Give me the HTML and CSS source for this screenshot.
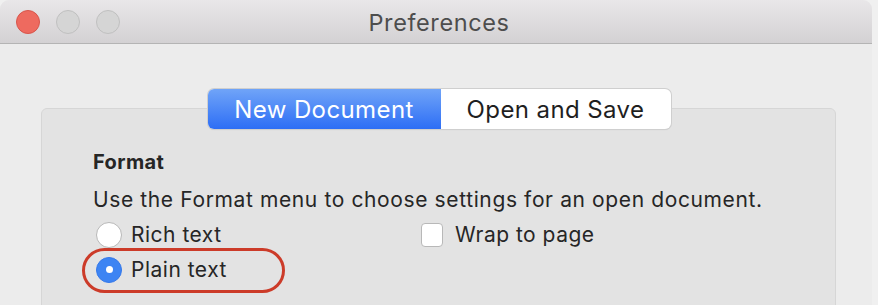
FILE: index.html
```html
<!DOCTYPE html>
<html lang="en">
<head>
  <meta charset="UTF-8">
  <title>Preferences</title>
  <link rel="stylesheet" href="styles.css">
</head>
<body>
  <div class="window">
    <div class="titlebar">
      <div class="lights">
        <span class="light close"></span>
        <span class="light"></span>
        <span class="light"></span>
      </div>
      <div class="title">Preferences</div>
    </div>

    <div class="content">
      <div class="segmented">
        <div class="seg active">New Document</div>
        <div class="seg">Open and Save</div>
      </div>

      <div class="panel">
        <div class="heading">Format</div>
        <div class="desc">Use the Format menu to choose settings for an open document.</div>

        <div class="options">
          <div class="col">
            <label class="option">
              <span class="radio"></span>
              Rich text
            </label>
            <label class="option marked">
              <span class="radio on"></span>
              Plain text
            </label>
          </div>
          <div class="col">
            <label class="option">
              <span class="check"></span>
              Wrap to page
            </label>
          </div>
        </div>
      </div>
    </div>
  </div>
</body>
</html>
```

FILE: styles.css
```css
body {
  margin: 0;
  width: 878px;
  height: 305px;
  overflow: hidden;
  background: #f0f0f0;
  font-family: 'Inter', 'Liberation Sans', sans-serif;
  color: #262626;
}
.window {
  width: 872px;
  height: 305px;
  background: #ececec;
  border-radius: 9px 9px 0 0;
  overflow: hidden;
}
.titlebar {
  height: 43px;
  border-bottom: 1px solid #b4b4b4;
  background: linear-gradient(#e9e7e9, #d3d1d3);
  display: flex;
  align-items: center;
  position: relative;
}
.lights {
  display: flex;
  gap: 16px;
  padding-left: 16px;
  margin-top: 1px;
}
.light {
  width: 22px;
  height: 22px;
  border-radius: 50%;
  background: #d5d5d5;
  border: 1px solid #c0c0c0;
}
.light.close {
  background: #ee6a5f;
  border-color: #d8554b;
}
.title {
  position: absolute;
  left: 0;
  right: -6px;
  top: 9px;
  text-align: center;
  font-size: 23.5px;
  line-height: 28px;
  letter-spacing: 0.6px;
  color: #4d4d4d;
}
.content {
  padding-top: 45px;
}
.segmented {
  display: flex;
  width: 463px;
  height: 40px;
  margin: 0 auto -21px;
  position: relative;
  left: 3px;
  z-index: 1;
  border-radius: 6px;
  background: #fff;
  box-shadow: 0 0 0 1px #cfcfcf, 0 1px 1px rgba(0,0,0,0.12);
  overflow: hidden;
}
.seg {
  display: flex;
  align-items: center;
  justify-content: center;
  font-size: 24px;
  letter-spacing: 0.4px;
  color: #1f1f1f;
}
.seg.active {
  width: 233px;
  color: #fff;
  background: linear-gradient(#70a4f8, #2d6ef5);
}
.seg + .seg {
  flex: 1;
}
.panel {
  margin-left: 41px;
  width: 795px;
  height: 240px;
  background: #e3e3e3;
  border: 1px solid #d6d6d6;
  border-radius: 6px;
  padding: 42px 0 0 51px;
  box-sizing: border-box;
}
.heading {
  font-size: 20px;
  line-height: 22px;
  letter-spacing: 0.4px;
  font-weight: bold;
}
.desc {
  margin-top: 14px;
  font-size: 21px;
  line-height: 26px;
  letter-spacing: 0.62px;
}
.options {
  display: flex;
  margin-top: 4px;
}
.col {
  display: flex;
  flex-direction: column;
  align-items: flex-start;
}
.col:first-child {
  width: 325px;
}
.option {
  display: flex;
  align-items: center;
  gap: 9px;
  height: 35px;
  font-size: 21px;
  letter-spacing: 0.5px;
  margin-left: 3px;
}
.radio {
  width: 26px;
  height: 26px;
  border-radius: 50%;
  background: #fff;
  border: 1px solid #b8b8b8;
  box-sizing: border-box;
}
.radio.on {
  background: #3d84f3;
  border-color: #3478ea;
  display: flex;
  align-items: center;
  justify-content: center;
}
.radio.on::after {
  content: '';
  width: 7px;
  height: 7px;
  border-radius: 50%;
  background: #fff;
}
.marked {
  position: relative;
}
.marked::after {
  content: '';
  position: absolute;
  left: -14px;
  right: -58px;
  top: -4px;
  bottom: -6px;
  border: 3px solid #cc3b29;
  border-radius: 23px;
}
.check {
  width: 22px;
  height: 24px;
  border-radius: 4px;
  background: #fff;
  border: 1px solid #b8b8b8;
  box-sizing: border-box;
  margin-right: 3px;
}
```
